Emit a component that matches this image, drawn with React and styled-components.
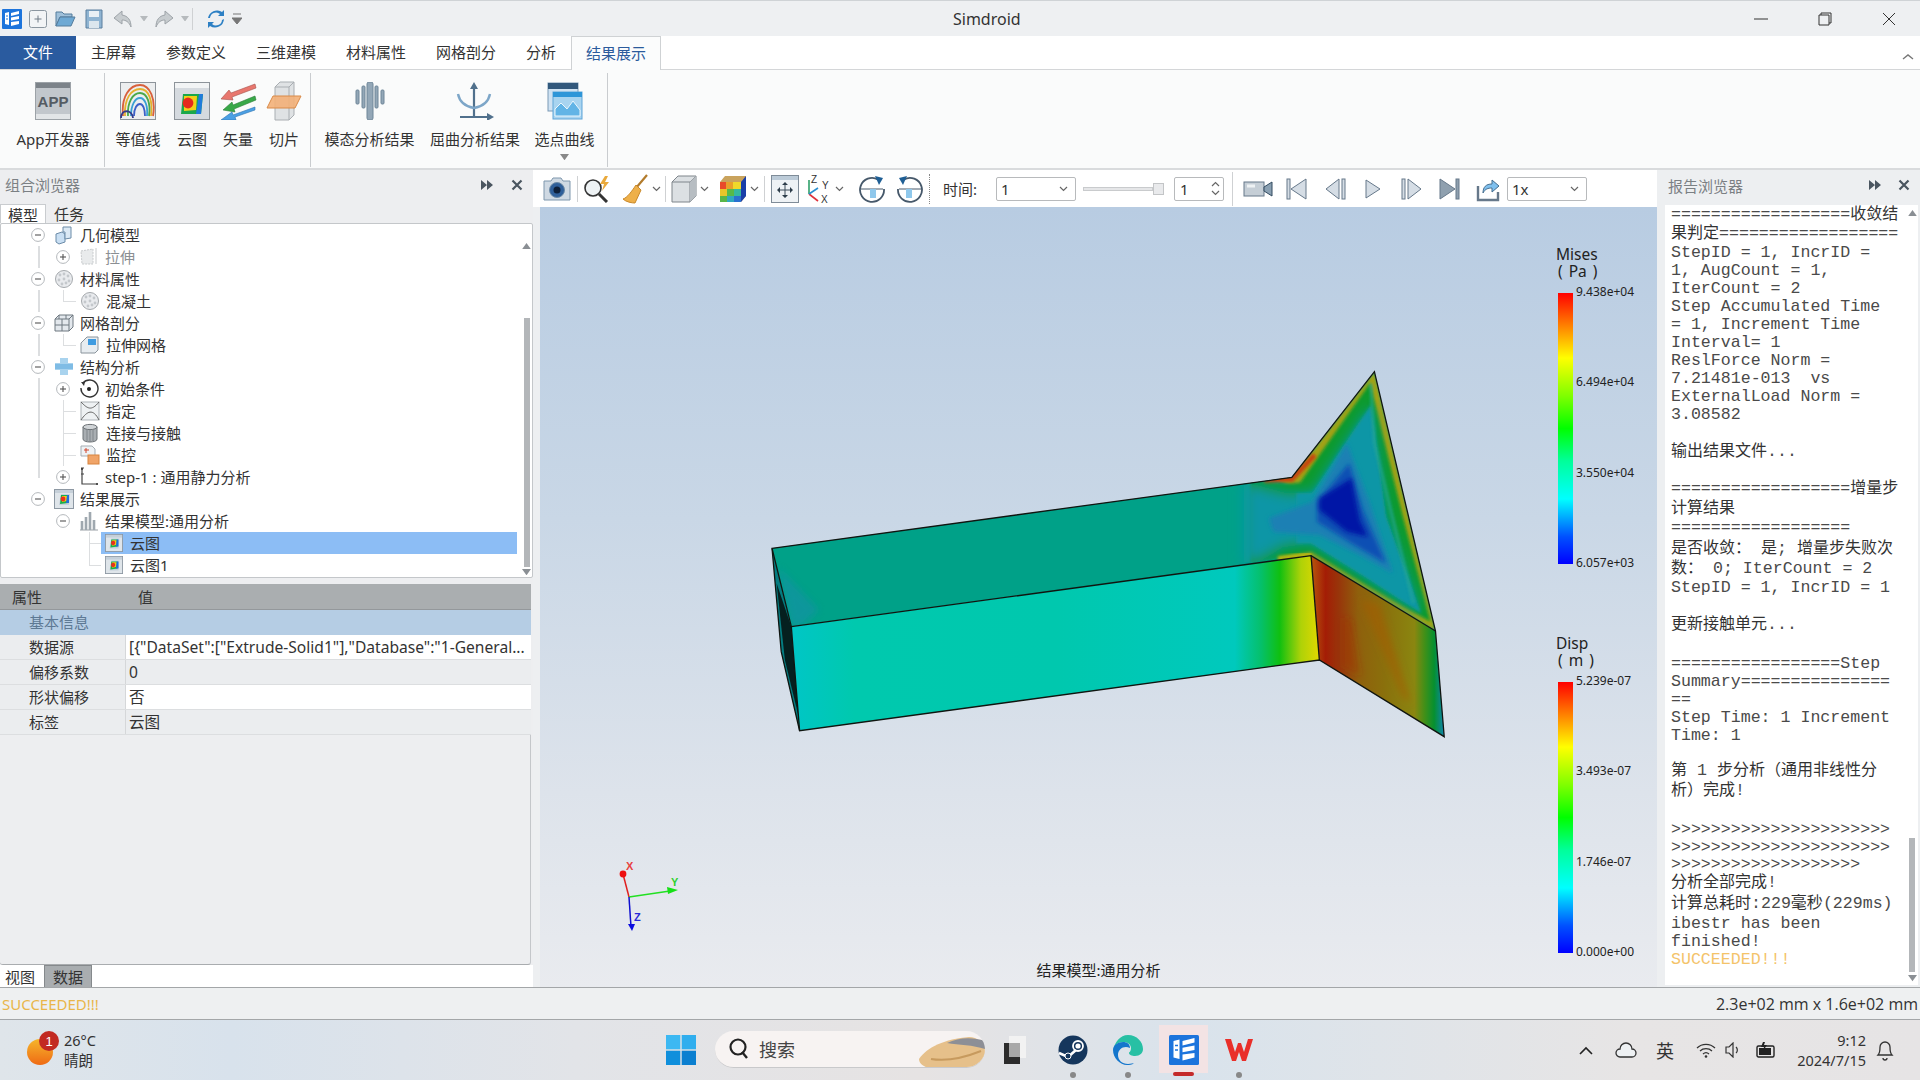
import React from "react";
import styled, { createGlobalStyle } from "styled-components";

const UI = `"Noto Sans","Noto Sans CJK SC",sans-serif`;
const Global = createGlobalStyle`
  html,body{margin:0;padding:0;background:#edeff1;overflow:hidden;}
  *{box-sizing:border-box;}
  body{font-family:${UI};color:#333;}
`;

const Page = styled.div`width:1920px;height:1080px;display:flex;flex-direction:column;overflow:hidden;background:#edeff1;`;

/* title bar */
const TitleBar = styled.div`height:36px;display:flex;align-items:center;background:#eef0f2;border-top:1px solid #cfd3d6;`;
const Quick = styled.div`width:953px;display:flex;align-items:center;padding-left:2px;`;
const QSlot = styled.div`width:${p => p.$w}px;margin-left:${p => p.$ml || 0}px;display:flex;justify-content:center;align-items:center;`;
const AppTitle = styled.div`width:67px;font-size:16px;line-height:20px;color:#333;white-space:nowrap;`;
const WinCtl = styled.div`flex:1;display:flex;justify-content:flex-end;padding-right:19px;gap:39px;`;
const WinBtn = styled.div`width:25px;display:flex;justify-content:center;`;

/* tabs */
const TabBar = styled.div`height:34px;display:flex;background:#fff;border-bottom:1px solid #d4d6d8;position:relative;`;
const FileTab = styled.div`width:76px;background:#2a5b9f;color:#fff;font-size:15px;line-height:33px;text-align:center;`;
const Tab = styled.div`padding:0 15px;font-size:15px;line-height:33px;color:${p => p.$on ? "#2b5b9c" : "#333"};
  ${p => p.$on ? "height:34px;background:#fbfcfc;border:1px solid #cfd2d4;border-bottom:none;margin-left:0;padding:0 14px;" : ""}`;
const Collapse = styled.div`margin-left:auto;padding:8px 6px 0 0;`;

/* ribbon */
const Ribbon = styled.div`height:100px;display:flex;background:#fafbfb;border-bottom:2px solid #d9dbdd;padding-top:3px;`;
const RCol = styled.div`width:${p => p.$w}px;margin-left:${p => p.$ml || 0}px;margin-right:${p => p.$mr || 0}px;display:flex;flex-direction:column;align-items:center;`;
const RIcon = styled.div`height:38px;margin-top:9px;display:flex;align-items:center;justify-content:center;`;
const RLabel = styled.div`margin-top:9px;font-size:15px;line-height:20px;color:#333;white-space:nowrap;`;
const RMore = styled.div`margin-top:5px;line-height:0;`;
const RSep = styled.div`width:1px;height:94px;background:#c9cccf;`;

/* main */
const Main = styled.div`height:817px;display:flex;`;
const Left = styled.div`width:533px;display:flex;flex-direction:column;background:#edeef0;`;
const DockHead = styled.div`height:34px;display:flex;align-items:center;padding:0 10px 5px 5px;gap:17px;font-size:15px;color:#7b8084;`;
const DockTitle = styled.div`flex:1;`;
const SubTabs = styled.div`height:19px;display:flex;font-size:15px;line-height:20px;`;
const SubTab = styled.div`white-space:nowrap;${p => p.$on ? "padding:0 7px;background:#fff;border:1px solid #c9cccf;border-bottom:none;width:46px;" : "padding:0 8px;"}`;
const TreeBox = styled.div`height:355px;display:flex;background:#fff;border:1px solid #c4c7ca;border-radius:2px;`;
const Rows = styled.div`flex:1;min-width:0;`;
const Row = styled.div`height:22px;display:flex;align-items:center;padding-left:${p => p.$pad}px;background:${p => p.$bg};`;
const Exp = styled.div`width:14px;height:14px;margin-right:${p => p.$mr}px;line-height:0;`;
const TreeIcon = styled.div`width:20px;height:20px;margin-right:6px;display:flex;align-items:center;justify-content:center;`;
const TreeLabel = styled.div`font-size:15px;line-height:22px;color:${p => p.$dim ? "#8b8f93" : "#333"};white-space:nowrap;`;
const Sel = styled.div`flex:1;height:22px;margin-right:4px;display:flex;align-items:center;padding-left:3px;background:${p => p.$on ? "#8cbdf5" : "transparent"};`;
const VScroll = styled.div`width:${p => p.$w}px;display:flex;flex-direction:column;align-items:center;flex:none;`;
const Thumb = styled.div`width:6px;background:#b3b6b9;height:${p => p.$h}px;`;
const Grow = styled.div`flex:1;`;
const Arrow = styled.div`height:${p => p.$h || 10}px;line-height:0;display:flex;align-items:center;`;

const Props = styled.div`margin-top:6px;width:531px;flex:1;display:flex;flex-direction:column;`;
const PHead = styled.div`height:26px;display:grid;grid-template-columns:126px 1fr;padding-left:12px;align-items:center;font-size:15px;background:#aaaeb0;border-bottom:1px solid #94989b;grid-auto-flow:column;`;
const PGroup = styled.div`height:25px;background:#b5cde4;color:#5d7994;font-size:15px;line-height:25px;padding-left:29px;`;
const PRow = styled.div`height:25px;display:grid;grid-template-columns:126px 1fr;background:${p => p.$alt ? "#ebedef" : "#fff"};border-bottom:1px solid #dcdee0;font-size:15px;line-height:24px;`;
const PKey = styled.div`padding-left:29px;border-right:1px solid #d5d7d9;background:#ebedef;`;
const PVal = styled.div`padding-left:3px;white-space:nowrap;overflow:hidden;font-size:15.6px;`;
const PFill = styled.div`flex:1;border-bottom:1px solid #a9acaf;border-right:1px solid #c4c7ca;border-radius:0 0 3px 3px;`;
const BottomTabs = styled.div`height:22px;display:flex;background:#fff;font-size:15px;line-height:24px;padding-left:5px;gap:9px;`;
const BTab = styled.div`${p => p.$on ? "padding:0 8px;background:#a9adb0;border:1px solid #85898c;border-bottom:none;line-height:22px;" : ""}`;

/* centre */
const Center = styled.div`width:1124px;display:flex;flex-direction:column;`;
const Toolbar = styled.div`height:37px;display:flex;align-items:center;background:#fff;padding-left:8px;`;
const TSlot = styled.div`width:${p => p.$w}px;margin-left:${p => p.$ml || 0}px;height:30px;flex:none;display:flex;align-items:center;justify-content:center;`;
const TSep = styled.div`width:1px;height:${p => p.$h || 26}px;background:#cfd1d3;margin:0 ${p => p.$m}px;flex:none;${p => p.$dots ? "background:none;border-left:1px dotted #888;" : ""}`;
const TimeLabel = styled.div`font-size:15px;margin:0 19px 0 10px;white-space:nowrap;line-height:20px;`;
const Combo = styled.div`width:${p => p.$w}px;height:24px;border:1px solid #b8babc;border-radius:2px;display:flex;align-items:center;justify-content:space-between;padding:0 6px 0 4px;font-size:15px;line-height:20px;background:#fff;flex:none;`;
const Slider = styled.div`width:81px;margin:0 10px 0 7px;display:flex;align-items:center;flex:none;`;
const SliderTrack = styled.div`flex:1;height:4px;background:#e5e6e8;border:1px solid #c9cbcd;`;
const SliderKnob = styled.div`width:11px;height:12px;background:#e9eaec;border:1px solid #c3c5c7;`;
const Spin = styled.div`width:50px;height:24px;border:1px solid #b8babc;border-radius:2px;display:flex;align-items:center;justify-content:space-between;padding:0 3px 0 5px;font-size:15px;line-height:20px;flex:none;`;
const SpinArrows = styled.div`display:flex;flex-direction:column;gap:3px;line-height:0;`;

const View = styled.div`flex:1;margin-left:7px;position:relative;background:linear-gradient(180deg,#b8cce2 0%,#c9d7e6 40%,#dde3eb 75%,#e9ebef 100%);overflow:hidden;`;
const Canvas = styled.svg`position:absolute;left:0;top:0;`;
const Legend = styled.div`position:absolute;left:1016px;top:${p => p.$top}px;`;
const LegTitle = styled.div`font-size:15.5px;line-height:17px;color:#222;padding-left:${p => p.$pad || 0}px;white-space:pre;word-spacing:2px;`;
const LegBody = styled.div`display:flex;margin-top:13px;margin-left:2px;height:271px;`;
const LegBar = styled.div`width:15px;background:linear-gradient(180deg,#ff0000 0%,#ff8000 12%,#ffff00 24%,#7fff00 38%,#00ff00 50%,#00ff9a 62%,#00ffff 76%,#0050ff 90%,#0000ff 100%);`;
const LegVals = styled.div`display:flex;flex-direction:column;justify-content:space-between;height:287px;margin:-9px 0 0 3px;font-size:12px;line-height:16px;color:#222;`;
const Caption = styled.div`position:absolute;left:0;right:0;bottom:7px;text-align:center;font-size:15px;line-height:20px;color:#222;`;

/* report */
const Right = styled.div`width:263px;display:flex;flex-direction:column;`;
const RHead = styled(DockHead)`padding:0 10px 5px 11px;height:35px;gap:16px;`;
const Report = styled.div`margin:0 2px 2px 8px;height:780px;background:#fff;display:flex;`;
const ReportText = styled.div`flex:1;padding-left:6px;font-family:"Liberation Mono",monospace;font-size:16.6px;color:#4a4a4a;overflow:hidden;`;
const Line = styled.div`height:${p => p.$h || 18}px;line-height:${p => p.$h || 18}px;white-space:pre;color:${p => p.$gold ? "#f4c36a" : "inherit"};${p => p.$cjk ? "transform:translateY(-2px);" : ""}`;
const Cjk = styled.span`font-family:"Noto Sans CJK SC",sans-serif;font-size:16px;color:#333;`;

/* status */
const Status = styled.div`height:33px;display:flex;justify-content:space-between;align-items:center;background:#eef0f1;border-top:1px solid #a3a6a8;border-bottom:1px solid #a3a6a8;padding:0 2px;font-size:15px;`;
const Gold = styled.div`color:#e9b64a;`;
const Dim = styled.div`font-size:16px;color:#333;font-family:"Open Sans",${UI};`;

/* taskbar */
const Taskbar = styled.div`height:60px;display:flex;background:linear-gradient(90deg,#dfe5ea 0%,#d8e2ec 12%,#e2e4e8 30%,#e6e3e3 48%,#d9e3ec 62%,#e7e5e5 85%,#e6e4e5 100%);`;
const Weather = styled.div`width:666px;display:flex;align-items:center;padding-left:26px;`;
const WeatherIcon = styled.div`width:38px;line-height:0;`;
const WeatherText = styled.div`font-size:14.5px;line-height:20px;color:#333;padding-top:0;`;
const WinLogo = styled.div`width:30px;display:flex;align-items:center;`;
const Search = styled.div`width:270px;height:37px;margin:11px 0 0 19px;border-radius:19px;background:#f7f3f2;border-bottom:1px solid #c9c9cb;display:flex;align-items:center;padding-left:14px;overflow:hidden;`;
const SearchText = styled.div`font-size:18px;margin-left:10px;color:#444;flex:1;`;
const TaskSlot = styled.div`width:${p => p.$w || 46}px;margin-left:${p => p.$ml || 0}px;height:60px;display:flex;flex-direction:column;align-items:center;padding-top:15px;flex:none;
  ${p => p.$active ? "background:linear-gradient(#f3e3e4,#f3e3e4) 0 5px/100% 48px no-repeat;" : ""}`;
const TaskIcon = styled.div`height:30px;display:flex;align-items:center;justify-content:center;`;
const Dot = styled.div`margin-top:7px;width:${p => p.$w || 6}px;height:${p => p.$w ? 4 : 6}px;border-radius:3px;background:${p => p.$c || "#888"};`;
const TrayItem = styled.div`width:${p => p.$w || 24}px;margin-left:${p => p.$ml || 0}px;height:60px;display:flex;align-items:center;justify-content:center;flex:none;font-size:18px;color:#333;padding-top:${p => p.$pt || 0}px;`;
const Clock = styled.div`width:80px;margin-left:9px;text-align:right;font-size:14.5px;line-height:20px;display:flex;flex-direction:column;justify-content:center;white-space:nowrap;color:#333;`;

/* icons */
const Chev = ({ c = "#666", w = 9 }) => <svg width={w} height="6" viewBox="0 0 9 6"><path d="M1 1l3.5 3.5L8 1" fill="none" stroke={c} strokeWidth="1.2" /></svg>;
const Tri = ({ d = "down", c = "#8a8f94", s = 9 }) => <svg width={s} height={s * .7} viewBox="0 0 10 7"><path d={d === "down" ? "M0 0h10L5 7z" : "M0 7h10L5 0z"} fill={c} /></svg>;
const SimLogo = ({ s = 20 }) => <svg width={s} height={s} viewBox="0 0 20 20"><rect width="20" height="20" rx="1" fill="#1c74dc" /><path d="M3 4l4-1v13l-4-1zM9 4l8-2v3l-8 2zM9 8.5l8-1.5v3l-8 1.5zM9 13l8-1v3l-8 2z" fill="#fff" /><path d="M4 7h2M4 10h2" stroke="#1c74dc" /></svg>;
const Heat = ({ s = 20, frame = "#8d98a3" }) => <svg width={s} height={s} viewBox="0 0 20 20"><rect x=".5" y=".5" width="19" height="19" fill="#dfe5ea" stroke={frame} /><rect x="1" y="1" width="18" height="3" fill="#c6d0d9" /><path d="M7 5h9l-1 11H5z" fill="#c4d0da" /><path d="M7 6h7v8l-8 1z" fill="#18b04a" /><path d="M8 7h5v5l-5 1z" fill="#f5c816" /><circle cx="9" cy="10" r="2.4" fill="#e8301c" /><path d="M13 6h2v8h-3z" fill="#1f6fd8" /></svg>;
const Exper = ({ open, mr }) => <Exp $mr={mr}><svg width="14" height="14" viewBox="0 0 14 14"><circle cx="7" cy="7" r="6.4" fill="#fff" stroke="#b4b8bc" /><path d="M4 7h6" stroke="#555" strokeWidth="1.1" />{!open && <path d="M7 4v6" stroke="#555" strokeWidth="1.1" />}</svg></Exp>;

const tIcons = {
  cubes: <svg width="20" height="20" viewBox="0 0 20 20"><path d="M2 9l6-2 3 2v8l-6 2-3-2z" fill="#c9dff3" stroke="#6b8ba8" /><path d="M9 2h8v11l-6 1V7H9z" fill="#dbe9f5" stroke="#6b8ba8" /></svg>,
  box: <svg width="20" height="20" viewBox="0 0 20 20"><path d="M2 4l12-2v15H3z" fill="#e9ebec" stroke="#c7cacc" strokeDasharray="2 1" /><path d="M17 1v16" stroke="#c7cacc" /></svg>,
  mat: <svg width="20" height="20" viewBox="0 0 20 20"><circle cx="10" cy="10" r="8.5" fill="#e9ebee" stroke="#a5a9ad" />{[[6, 6], [10, 5], [14, 7], [5, 11], [10, 10], [15, 12], [8, 15], [12, 14]].map(([x, y], i) => <circle key={i} cx={x} cy={y} r="1.4" fill="#c4c8cc" />)}</svg>,
  mesh: <svg width="20" height="20" viewBox="0 0 20 20"><path d="M1 6l4-4h14v12l-4 4H1z" fill="#e3e8ed" stroke="#6e7880" /><path d="M1 6h14v12M15 6l4-4M8 6v12M1 12h14M5 2v4M12 2v4" fill="none" stroke="#6e7880" /></svg>,
  meshb: <svg width="20" height="20" viewBox="0 0 20 20"><path d="M1 8l6-6h11v13l-3 3H1z" fill="#e7ecf0" stroke="#8a949c" /><rect x="8" y="4" width="8" height="6" fill="#3f9be0" /></svg>,
  struct: <svg width="20" height="20" viewBox="0 0 20 20"><path d="M6 1h8v5h5v7h-5v5H6v-5H1V6h5z" fill="#a9d3ee" /><rect x="1" y="7" width="18" height="5" fill="#7fbce5" /></svg>,
  init: <svg width="20" height="20" viewBox="0 0 20 20"><path d="M4 4a8.5 8.5 0 1 1-2 5" fill="none" stroke="#333" strokeWidth="1.4" /><circle cx="10" cy="10" r="2" fill="#222" /><path d="M2 3l4 0-1 4z" fill="#333" /></svg>,
  assign: <svg width="20" height="20" viewBox="0 0 20 20"><rect x="1" y="1" width="18" height="18" fill="#eef1f3" stroke="#aeb3b8" /><path d="M1 1c6 6 10 10 18 0M1 19c6-9 12-12 18 0" fill="none" stroke="#666" /></svg>,
  cyl: <svg width="20" height="20" viewBox="0 0 20 20"><path d="M3 4v12c0 4 14 4 14 0V4z" fill="#a9aeb2" stroke="#6d7276" /><ellipse cx="10" cy="4" rx="7" ry="2.6" fill="#cfd3d6" stroke="#6d7276" /><path d="M7 6v12M10 7v12M13 6v12" stroke="#80868b" /></svg>,
  mon: <svg width="20" height="20" viewBox="0 0 20 20"><path d="M1 1h11l3 3v7H1z" fill="#eef2f5" stroke="#a5adb4" /><path d="M4 5h5M6 3v5" stroke="#d0452c" /><rect x="8" y="10" width="11" height="9" fill="#f0a468" stroke="#d8843e" /></svg>,
  step: <svg width="20" height="20" viewBox="0 0 20 20"><path d="M3 1v16h16" fill="none" stroke="#444" strokeWidth="1.2" /><path d="M2 7h3M2 1h3" stroke="#444" /><circle cx="3" cy="2" r="1" fill="#333" /><circle cx="18" cy="17" r="1" fill="#333" /></svg>,
  bars: <svg width="20" height="20" viewBox="0 0 20 20"><path d="M1 19h18" stroke="#9aa0a5" /><path d="M3 10v9M7 6v13M11 1v18M15 9v10" stroke="#9fa8af" strokeWidth="2.6" /></svg>,
};

const treeData = [
  { l: 0, open: true, icon: "cubes", t: "几何模型", lines: [] },
  { l: 1, icon: "box", t: "拉伸", dim: true, lines: [[37, 0, 2, 22]] },
  { l: 0, open: true, icon: "mat", t: "材料属性", lines: [] },
  { l: 1, leaf: true, icon: "mat", t: "混凝土", lines: [[37, 0, 2, 22], [62, 0, 1, 11], [62, 11, 13, 1]] },
  { l: 0, open: true, icon: "mesh", t: "网格剖分", lines: [] },
  { l: 1, leaf: true, icon: "meshb", t: "拉伸网格", lines: [[37, 0, 2, 22], [62, 0, 1, 11], [62, 11, 13, 1]] },
  { l: 0, open: true, icon: "struct", t: "结构分析", lines: [] },
  { l: 1, icon: "init", t: "初始条件", lines: [[37, 0, 2, 22]] },
  { l: 1, leaf: true, icon: "assign", t: "指定", lines: [[37, 0, 2, 22], [62, 0, 1, 22], [62, 11, 13, 1]] },
  { l: 1, leaf: true, icon: "cyl", t: "连接与接触", lines: [[37, 0, 2, 22], [62, 0, 1, 22], [62, 11, 13, 1]] },
  { l: 1, leaf: true, icon: "mon", t: "监控", lines: [[37, 0, 2, 22], [62, 0, 1, 22], [62, 11, 13, 1]] },
  { l: 1, icon: "step", t: "step-1 : 通用静力分析", lines: [[37, 0, 2, 12]] },
  { l: 0, open: true, icon: "heat", t: "结果展示", lines: [] },
  { l: 1, open: true, icon: "bars", t: "结果模型:通用分析", lines: [] },
  { l: 2, icon: "heat", t: "云图", sel: true, lines: [[88, 0, 1, 22], [88, 11, 12, 1]] },
  { l: 2, icon: "heat", t: "云图1", lines: [[88, 0, 1, 11], [88, 11, 12, 1]] },
];
const lineBg = lines => lines.map(([x, y, w, h]) => `linear-gradient(#dcdee0,#dcdee0) ${x}px ${y}px/${w}px ${h}px no-repeat`).join(",") || "none";

const TreeRow = ({ d }) => {
  const icon = d.icon === "heat" ? <Heat s={d.l === 0 ? 20 : 18} /> : tIcons[d.icon];
  if (d.l === 2) return (
    <Row $pad={100} $bg={lineBg(d.lines)}>
      <Sel $on={d.sel}><TreeIcon>{icon}</TreeIcon><TreeLabel>{d.t}</TreeLabel></Sel>
    </Row>);
  const pad = d.l === 0 ? 30 : d.leaf ? 79 : 55;
  return (
    <Row $pad={pad} $bg={lineBg(d.lines)}>
      {!d.leaf && <Exper open={d.open} mr={9} />}
      <TreeIcon>{icon}</TreeIcon>
      <TreeLabel $dim={d.dim}>{d.t}</TreeLabel>
    </Row>);
};

const DockBtns = () => <>
  <svg width="14" height="12" viewBox="0 0 14 12"><path d="M1 1l6 5-6 5zM7 1l6 5-6 5z" fill="#4a5560" /></svg>
  <svg width="12" height="12" viewBox="0 0 12 12"><path d="M1.5 1.5l9 9M10.5 1.5l-9 9" stroke="#4a5560" strokeWidth="2.2" /></svg>
</>;

/* ribbon art */
const AppIcon = () => <svg width="36" height="38" viewBox="0 0 36 38"><rect x=".5" y=".5" width="35" height="37" fill="#c2c7cc" stroke="#9ca2a7" /><rect x="1" y="1" width="34" height="5" fill="#7c8389" /><rect x="1" y="32" width="34" height="5" fill="#e2e5e7" /><text x="18" y="25" textAnchor="middle" fontSize="15" fontWeight="700" fill="#555c63" fontFamily="Liberation Sans">APP</text></svg>;
const ContourIcon = () => <svg width="36" height="38" viewBox="0 0 36 38"><rect x=".5" y=".5" width="35" height="37" fill="#eceeef" stroke="#8d949a" /><g fill="none" strokeWidth="1.8"><path d="M3 34C1 14 10 3 20 3s16 14 13 31" stroke="#d8603c" /><path d="M5 34C4 17 11 7 20 7s13 12 11 27" stroke="#e5b12e" /><path d="M8 34C7 20 13 11 20 11s11 10 9 23" stroke="#49a84a" /><path d="M11 34c0-11 4-18 9-18s8 8 7 18" stroke="#39a0d4" /><path d="M14 34c0-8 3-12 6-12s5 5 5 12" stroke="#3b5fc8" /><path d="M1 36c0-9 11-9 12 0" stroke="#333a8a" /></g></svg>;
const CloudIcon = () => <svg width="36" height="38" viewBox="0 0 36 38"><rect x=".5" y=".5" width="35" height="37" fill="#d5dadf" stroke="#8d949a" /><rect x="1" y="1" width="34" height="5" fill="#f2f4f5" /><path d="M9 12h20l-2 20H7z" fill="#1ba84a" /><path d="M10 14h13l-1 14-12 1z" fill="#f3d018" /><circle cx="14" cy="21" r="5.4" fill="#e52a1c" /><path d="M25 12h4l-2 20h-5z" fill="#1f7bdc" /></svg>;
const VecIcon = () => <svg width="38" height="38" viewBox="0 0 38 38"><path d="M36 2L12 11l-2-3-8 9 12 1-1-3 24-9z" fill="#e8776e" stroke="#a5534c" strokeWidth=".6" /><path d="M36 14L14 23l-1-3-9 8 12 2-1-3 22-9z" fill="#38a848" stroke="#2c7c38" strokeWidth=".6" /><path d="M36 25L14 33l-1-3-11 8h15l-1-3 20-7z" fill="#4ba0e4" stroke="#2d73b2" strokeWidth=".6" /></svg>;
const SliceIcon = () => <svg width="36" height="40" viewBox="0 0 36 40"><path d="M9 6l5-5h14v33l-5 5H9z" fill="#dfe2e4" stroke="#a9aeb2" /><path d="M9 6h14v33M23 6l5-5" fill="none" stroke="#a9aeb2" /><path d="M7 15h28l-6 12H1z" fill="#f3b078" fillOpacity=".9" stroke="#d98a48" /></svg>;
const ModeIcon = () => <svg width="32" height="38" viewBox="0 0 32 38"><g fill="#93a7b7" stroke="#6f8698"><rect x="13" y="0" width="6" height="38" rx="2" /><rect x="8" y="4" width="3" height="22" rx="1" /><rect x="21" y="4" width="3" height="22" rx="1" /><rect x="2" y="8" width="3" height="14" rx="1" /><rect x="27" y="8" width="3" height="14" rx="1" /></g></svg>;
const BuckleIcon = () => <svg width="38" height="38" viewBox="0 0 38 38"><path d="M18 36V5M4 35h32" stroke="#50708c" strokeWidth="2.2" /><path d="M18 0l-4 7h8zM38 35l-7-4v8z" fill="#50708c" /><path d="M2 12c2 10 10 13 16 14 6-1 14-4 16-14" fill="none" stroke="#7da6c8" strokeWidth="2.4" /></svg>;
const CurveIcon = () => <svg width="36" height="38" viewBox="0 0 36 38"><rect x="1" y="1" width="30" height="28" fill="#cfe2f2" stroke="#7a9ab6" /><rect x="1" y="1" width="30" height="6" fill="#31587c" /><rect x="6" y="10" width="29" height="27" fill="#a8d4f0" stroke="#5fa5d8" /><rect x="6" y="10" width="29" height="5" fill="#2e96d8" /><path d="M8 34V27l6-6 6 6 6-8 7 9v6z" fill="#62b4e6" stroke="#eaf6fd" /></svg>;

/* toolbar art */
const Camera = () => <svg width="28" height="26" viewBox="0 0 28 26"><path d="M1 5h7l2-3h8l2 3h7v19H1z" fill="#cfd9e3" stroke="#7f97ad" /><circle cx="14" cy="14" r="7.5" fill="#2f5f9a" stroke="#6c8aa6" /><circle cx="14" cy="14" r="3.5" fill="#0d1f3a" /></svg>;
const MagBolt = () => <svg width="30" height="28" viewBox="0 0 30 28"><circle cx="10" cy="13" r="8" fill="#eef2f4" stroke="#333" strokeWidth="1.6" /><path d="M16 19l8 8" stroke="#333" strokeWidth="3" /><path d="M22 1l-5 8h4l-2 7 7-9h-4l3-6z" fill="#e9a93c" /></svg>;
const Broom = () => <svg width="26" height="30" viewBox="0 0 26 30"><path d="M25 1L14 14" stroke="#b27b2c" strokeWidth="2.2" /><path d="M14 11l5 5-6 13c-3 0-9-1-12-4 4-1 9-8 13-14z" fill="#eeb04a" stroke="#c9892a" /></svg>;
const BoxIc = () => <svg width="26" height="28" viewBox="0 0 26 28"><path d="M1 7l6-6h18v20l-6 6H1z" fill="#dce0e3" stroke="#7e858b" /><path d="M1 7h18v20M19 7l6-6" fill="none" stroke="#7e858b" /><path d="M19 7l6-6v20l-6 6z" fill="#b7bdc2" /></svg>;
const Cube3 = () => <svg width="28" height="28" viewBox="0 0 28 28"><path d="M1 7l5-6h21v20l-5 6H1z" fill="#c9a35d" /><rect x="1" y="7" width="6" height="7" fill="#e84a2a" /><rect x="7" y="7" width="7" height="7" fill="#e8a02a" /><rect x="14" y="7" width="8" height="7" fill="#efd92a" /><rect x="1" y="14" width="7" height="7" fill="#e8c52a" /><rect x="8" y="14" width="7" height="7" fill="#58b948" /><rect x="15" y="14" width="7" height="7" fill="#35b8a0" /><rect x="1" y="21" width="7" height="6" fill="#59b548" /><rect x="8" y="21" width="7" height="6" fill="#30a8c0" /><rect x="15" y="21" width="7" height="6" fill="#2a70d0" /><path d="M22 7l5-6v20l-5 6z" fill="#1a3fa8" /></svg>;
const FitIc = () => <svg width="28" height="28" viewBox="0 0 28 28"><rect x=".5" y=".5" width="27" height="27" fill="#eef2f5" stroke="#7f8c98" /><rect x="1" y="1" width="26" height="4" fill="#bccbd8" /><path d="M14 8v14M7 15h14" stroke="#3a4a58" /><path d="M14 7l-3 3h6zM14 23l-3-3h6zM6 15l3-3v6zM22 15l-3-3v6z" fill="#2d3d4a" /></svg>;
const Axes = () => <svg width="30" height="30" viewBox="0 0 30 30"><path d="M7 20V6" stroke="#2fa06a" strokeWidth="1.6" /><path d="M7 20l9 7" stroke="#e0323c" strokeWidth="1.6" /><path d="M7 20l9-6" stroke="#2a8fd0" strokeWidth="1.6" /><g fontFamily="Liberation Sans" fontSize="10" fill="#333"><text x="9" y="9">Z</text><text x="20" y="15">Y</text><text x="19" y="29">X</text></g></svg>;
const Rot = ({ flip }) => <svg width="28" height="28" viewBox="0 0 28 28" style={flip ? { transform: "scaleX(-1)" } : undefined}><path d="M20 4.5A12 12 0 1 0 26 14" fill="none" stroke="#46586a" strokeWidth="1.8" /><path d="M17 1l8 2-4 7z" fill="#1f5f95" /><path d="M3 14h22" stroke="#46586a" /><rect x="12" y="14" width="6" height="9" fill="#8fc8ec" /></svg>;
const pb = { fill: "#d5dde5", stroke: "#66788a" };
const Rec = () => <svg width="30" height="20" viewBox="0 0 30 20"><rect x="1" y="3" width="20" height="14" fill="#c5ced6" stroke="#66788a" /><path d="M4 7h8" stroke="#eef2f4" strokeWidth="3" /><path d="M21 8l8-5v14l-8-5z" fill="#8aa0b2" stroke="#324b60" /></svg>;
const First = () => <svg width="22" height="22" viewBox="0 0 22 22"><rect x="1" y="1" width="3" height="20" {...pb} /><path d="M20 1v20L5 11z" {...pb} /></svg>;
const Prev = () => <svg width="22" height="22" viewBox="0 0 22 22"><path d="M14 1v20L1 11z" {...pb} /><rect x="17" y="1" width="3" height="20" {...pb} /></svg>;
const Play = () => <svg width="18" height="22" viewBox="0 0 18 22"><path d="M2 2v18l14-9z" {...pb} /></svg>;
const Next = () => <svg width="22" height="22" viewBox="0 0 22 22"><rect x="2" y="1" width="3" height="20" {...pb} /><path d="M8 1v20l13-10z" {...pb} /></svg>;
const Last = () => <svg width="22" height="22" viewBox="0 0 22 22"><path d="M2 1v20l15-10z" fill="#8fa0af" stroke="#66788a" /><rect x="18" y="1" width="3" height="20" fill="#8fa0af" stroke="#66788a" /></svg>;
const Export = () => <svg width="26" height="26" viewBox="0 0 26 26"><path d="M3 10v14h20v-8" fill="none" stroke="#66788a" strokeWidth="2.4" /><path d="M8 17c0-6 3-9 9-9V4l7 6-7 6v-4c-4 0-7 1-9 5z" fill="#7fc0ee" stroke="#456d8e" /></svg>;

/* model */
const X = x => 750 + x / 2.178 - 540;
const Y = y => 350 + y / 3 - 207;
const p = (...a) => a.map(([x, y]) => `${X(x)},${Y(y)}`).join(" ");
const path = (...a) => "M" + a.map(([x, y]) => `${X(x)} ${Y(y)}`).join("L");
const A = [48, 595], B = [90, 830], C = [1180, 382], D = [1222, 617], E = [1360, 65], F = [1493, 843], G = [1512, 1160], H = [1240, 930], I = [108, 1142], L = [68, 905];

const Model = () => (
  <Canvas width="1117" height="780" viewBox="0 0 1117 780">
    <defs>
      <filter id="b1" x="-20%" y="-20%" width="140%" height="140%"><feGaussianBlur stdDeviation="1.4" /></filter>
      <filter id="b2" x="-20%" y="-20%" width="140%" height="140%"><feGaussianBlur stdDeviation="2.2" /></filter>
      <filter id="b4" x="-20%" y="-20%" width="140%" height="140%"><feGaussianBlur stdDeviation="3.5" /></filter>
      <filter id="b6" x="-30%" y="-30%" width="160%" height="160%"><feGaussianBlur stdDeviation="7" /></filter>
      <clipPath id="topClip"><polygon points={p(A, C, E, F, D, B)} /></clipPath>
      <clipPath id="sideClip"><polygon points={p(D, F, G, H)} /></clipPath>
      <linearGradient id="front" x1="0" x2="1" y1="0" y2="0">
        <stop offset="0" stopColor="#00c6c6" /><stop offset=".12" stopColor="#00c9ae" /><stop offset=".5" stopColor="#00c8ae" />
        <stop offset=".84" stopColor="#00c9bd" /><stop offset=".89" stopColor="#05c06a" /><stop offset=".925" stopColor="#10c010" />
        <stop offset=".965" stopColor="#aed208" /><stop offset="1" stopColor="#e2d800" />
      </linearGradient>
      <linearGradient id="side" gradientUnits="userSpaceOnUse" x1={X(1225)} x2={X(1510)} y1="0" y2="0">
        <stop offset="0" stopColor="#b5520c" /><stop offset=".1" stopColor="#a41d05" /><stop offset=".2" stopColor="#98350a" /><stop offset=".35" stopColor="#8f600c" />
        <stop offset=".55" stopColor="#8a700c" /><stop offset=".78" stopColor="#8a8610" /><stop offset=".86" stopColor="#3f9018" /><stop offset=".93" stopColor="#069030" /><stop offset="1" stopColor="#0e86a4" />
      </linearGradient>
    </defs>
    <polygon points={p(A, B, I, L)} fill="#047c80" />
    <polygon points={p([58, 700], B, [106, 1100], [76, 930])} fill="#05201f" />
    <polygon points={p(A, C, E, F, D, B)} fill="#00a188" />
    <g clipPath="url(#topClip)">
      <polygon points={p([60, 650], [150, 780], [110, 830], B)} fill="#1590a8" opacity=".6" filter="url(#b4)" />
      <polygon points={p([1130, 380], C, E, F, D, [1150, 650], [1150, 600], [1200, 420])} fill="#a2a212" filter="url(#b1)" />
      <polygon points={p([1090, 392], [1170, 402], [1198, 398], [1350, 100], [1422, 500], [1482, 815], [1350, 712], [1222, 605], [1140, 628], [1090, 640])} fill="#089a2a" filter="url(#b1)" />
      <polygon points={p([1075, 395], [1165, 428], [1225, 428], [1352, 165], [1385, 500], [1462, 790], [1350, 690], [1222, 580], [1160, 592], [1115, 630], [1075, 645])} fill="#0f96a6" filter="url(#b6)" />
      <polygon points={p([1190, 430], [1225, 428], [1352, 165], [1385, 500], [1462, 790], [1350, 690], [1222, 580], [1190, 580])} fill="#0f96a6" filter="url(#b1)" />
      <polygon points={p([1130, 505], [1225, 455], [1300, 280], [1350, 460], [1400, 670], [1335, 620], [1240, 555], [1140, 545])} fill="#1a80b4" filter="url(#b2)" />
      <polygon points={p([1235, 455], [1305, 340], [1335, 480], [1385, 640], [1310, 580], [1235, 515])} fill="#0e50b4" filter="url(#b2)" />
      <polygon points={p([1240, 445], [1310, 385], [1328, 510], [1345, 560], [1300, 545], [1240, 480])} fill="#0612a6" filter="url(#b2)" />
      <path d={path([1120, 390], [1180, 388], [1230, 315])} fill="none" stroke="#c8420e" strokeWidth="5" filter="url(#b1)" />
      <path d={path([1150, 625], [1222, 612])} fill="none" stroke="#c0b810" strokeWidth="4" filter="url(#b1)" />
      <path d={path([1352, 100], [1360, 280], [1445, 760])} fill="none" stroke="#27a898" strokeWidth="2.5" opacity=".8" filter="url(#b1)" />
    </g>
    <polygon points={p(B, D, H, I)} fill="url(#front)" />
    <polygon points={p(D, F, G, H)} fill="url(#side)" />
    <g clipPath="url(#sideClip)" filter="url(#b4)">
      <polygon points={p([1330, 750], [1370, 760], [1440, 1060], [1420, 1040])} fill="#a85a0c" opacity=".5" />
      <polygon points={p([1290, 800], [1310, 810], [1330, 980], [1290, 950])} fill="#a22808" opacity=".35" />
    </g>
    <g fill="none" stroke="#101510" strokeWidth="1.3">
      <polygon points={p(A, C, E, F, G, H, I, L)} />
      <polyline points={p(A, B, I)} />
      <polyline points={p(B, D, F)} />
      <polyline points={p(D, H)} />
    </g>
    <g transform="translate(-540 -207)">
      <path d="M629 897L623 874" stroke="#e02020" strokeWidth="1.5" /><circle cx="623" cy="874" r="3.4" fill="#ee1010" />
      <path d="M629 897L670 891" stroke="#22e022" strokeWidth="1.5" /><path d="M667 887l11 3-10 4z" fill="#16e016" />
      <path d="M629 897l2 30" stroke="#1010d0" strokeWidth="1.5" /><path d="M628 924h7l-3 7z" fill="#0c0ce0" />
      <g fontFamily="Liberation Sans" fontSize="11" fontWeight="700"><text x="626" y="870" fill="#e84040">X</text><text x="671" y="886" fill="#30d030">Y</text><text x="634" y="921" fill="#2a2ad8">Z</text></g>
    </g>
  </Canvas>
);

const report = [
  ["==================收敛结", 18], ["果判定==================", 21],
  ["StepID = 1, IncrID ="], ["1, AugCount = 1,"], ["IterCount = 2"], ["Step Accumulated Time"], ["= 1, Increment Time"], ["Interval= 1"], ["ReslForce Norm ="], ["7.21481e-013  vs"], ["ExternalLoad Norm ="], ["3.08582"], [" ", 17],
  ["输出结果文件...", 20], [" ", 17], ["==================增量步", 20], ["计算结果", 20], ["==================", 20], ["是否收敛： 是; 增量步失败次", 20], ["数： 0; IterCount = 2", 21], ["StepID = 1, IncrID = 1"], [" ", 17],
  ["更新接触单元...", 20], [" ", 21], ["=================Step"], ["Summary===============" ], ["=="], ["Step Time: 1 Increment"], ["Time: 1"], [" ", 15],
  ["第 1 步分析（通用非线性分", 20], ["析）完成!", 20], [" ", 21],
  [">>>>>>>>>>>>>>>>>>>>>>"], [">>>>>>>>>>>>>>>>>>>>>>"], [">>>>>>>>>>>>>>>>>>>", 15], ["分析全部完成!", 20], ["计算总耗时:229毫秒(229ms)", 23], ["ibestr has been"], ["finished!"], ["SUCCEEDED!!!", 18, true],
];
const cjkRe = /([\u4e00-\u9fff\uff00-\uffef]+)/;
const mixed = t => t.split(cjkRe).map((s, i) => i % 2 ? <Cjk key={i}>{s}</Cjk> : s);

const Copy = () => <svg width="24" height="30" viewBox="0 0 24 30"><rect x="6" y="1" width="17" height="22" fill="#f2f2f2" /><rect x="1" y="8" width="16" height="21" fill="#2c2c2c" /><rect x="6" y="8" width="11" height="14" fill="#a8a8a8" /></svg>;
const Steam = () => <svg width="30" height="30" viewBox="0 0 30 30"><circle cx="15" cy="15" r="14.5" fill="#15365c" /><circle cx="20" cy="11" r="5" fill="none" stroke="#fff" strokeWidth="1.8" /><circle cx="20" cy="11" r="2.6" fill="#fff" /><path d="M1 18l9 4 8-7" stroke="#fff" strokeWidth="2.6" fill="none" /><circle cx="10" cy="21" r="3" fill="#15365c" stroke="#fff" /></svg>;
const Edge = () => <svg width="32" height="32" viewBox="0 0 32 32"><path d="M16 1c9 0 15 7 15 14 0 4-3 7-8 7-3 0-6-1-6-3 0-1 2-1 2-5 0-4-4-6-8-6-5 0-9 3-10 8C3 8 8 1 16 1z" fill="#27c0a4" /><path d="M1 16c0-5 5-8 10-8 4 0 7 2 7 6-6-3-12 1-12 7 0 5 4 9 10 9 3 0 5-1 6-1-2 2-5 2-7 2C8 31 1 24 1 16z" fill="#1476cc" /></svg>;
const Wps = () => <svg width="30" height="26" viewBox="0 0 30 26"><path d="M1 2h6l4 13 3-9h3l3 9 4-13h5l-7 22h-4l-3-9-3 9H8z" fill="#e92f2a" /></svg>;

export default function App() {
  return (
    <Page>
      <Global />
      <TitleBar>
        <Quick>
          <QSlot $w={20}><SimLogo /></QSlot>
          <QSlot $w={18} $ml={7}><svg width="18" height="18" viewBox="0 0 18 18"><rect x=".5" y=".5" width="17" height="17" rx="2" fill="#f2f4f6" stroke="#8b96a0" /><path d="M5.5 9h7M9 5.5v7" stroke="#6e7a86" /></svg></QSlot>
          <QSlot $w={21} $ml={8}><svg width="21" height="17" viewBox="0 0 21 17"><path d="M1 2h6l2 2h8v3H5l-4 9z" fill="#9fc0da" stroke="#557c9c" /><path d="M5 7h15l-4 9H1z" fill="#6ea9d4" stroke="#557c9c" /></svg></QSlot>
          <QSlot $w={18} $ml={9}><svg width="18" height="20" viewBox="0 0 18 20"><path d="M1 1h16v18H1z" fill="#8fb4d2" stroke="#5a7f9e" /><rect x="4" y="2" width="10" height="6" fill="#e9f0f5" /><rect x="4" y="12" width="10" height="7" fill="#dbe6ee" /></svg></QSlot>
          <QSlot $w={20} $ml={10}><svg width="20" height="18" viewBox="0 0 20 18"><path d="M9 1L1 8l8 6v-4c4 0 7 2 9 7 0-7-3-11-9-12z" fill="#c7cccf" stroke="#9da3a8" /></svg></QSlot>
          <QSlot $w={8} $ml={7}><Tri c="#b6babd" s={8} /></QSlot>
          <QSlot $w={20} $ml={6}><svg width="20" height="18" viewBox="0 0 20 18"><path d="M11 1l8 7-8 6v-4c-4 0-7 2-9 7 0-7 3-11 9-12z" fill="#c7cccf" stroke="#9da3a8" /></svg></QSlot>
          <QSlot $w={8} $ml={7}><Tri c="#b6babd" s={8} /></QSlot>
          <TSep $m={3} $h={22} />
          <QSlot $w={18} $ml={11}><svg width="18" height="20" viewBox="0 0 18 20"><path d="M3 9a6 6 0 0 1 10-4l-2 2h6V1l-2 2A9 9 0 0 0 1 9zM15 11a6 6 0 0 1-10 4l2-2H1v6l2-2a9 9 0 0 0 14-7z" fill="#2d80c4" /></svg></QSlot>
          <QSlot $w={10} $ml={7}><svg width="10" height="11" viewBox="0 0 10 11"><path d="M1 1h8M0 5h10l-5 6z" stroke="#777" fill="#777" /></svg></QSlot>
        </Quick>
        <AppTitle>Simdroid</AppTitle>
        <WinCtl>
          <WinBtn><svg width="14" height="14" viewBox="0 0 14 14"><path d="M0 7h14" stroke="#333" /></svg></WinBtn>
          <WinBtn><svg width="14" height="14" viewBox="0 0 14 14"><path d="M3 3V1h10v10h-2M1 3h10v10H1z" fill="none" stroke="#333" /></svg></WinBtn>
          <WinBtn><svg width="14" height="14" viewBox="0 0 14 14"><path d="M1 1l12 12M13 1L1 13" stroke="#333" /></svg></WinBtn>
        </WinCtl>
      </TitleBar>

      <TabBar>
        <FileTab>文件</FileTab>
        {["主屏幕", "参数定义", "三维建模", "材料属性", "网格剖分", "分析"].map(t => <Tab key={t}>{t}</Tab>)}
        <Tab $on>结果展示</Tab>
        <Collapse><svg width="12" height="8" viewBox="0 0 12 8"><path d="M1 6l5-4 5 4" fill="none" stroke="#777" strokeWidth="1.4" /></svg></Collapse>
      </TabBar>

      <Ribbon>
        <RCol $w={102} $ml={2}><RIcon><AppIcon /></RIcon><RLabel>App开发器</RLabel></RCol>
        <RSep />
        <RCol $w={66}><RIcon><ContourIcon /></RIcon><RLabel>等值线</RLabel></RCol>
        <RCol $w={42}><RIcon><CloudIcon /></RIcon><RLabel>云图</RLabel></RCol>
        <RCol $w={50}><RIcon><VecIcon /></RIcon><RLabel>矢量</RLabel></RCol>
        <RCol $w={42} $mr={5}><RIcon><SliceIcon /></RIcon><RLabel>切片</RLabel></RCol>
        <RSep />
        <RCol $w={117}><RIcon><ModeIcon /></RIcon><RLabel>模态分析结果</RLabel></RCol>
        <RCol $w={94}><RIcon><BuckleIcon /></RIcon><RLabel>屈曲分析结果</RLabel></RCol>
        <RCol $w={85}><RIcon><CurveIcon /></RIcon><RLabel>选点曲线</RLabel><RMore><Tri c="#888" /></RMore></RCol>
        <RSep />
      </Ribbon>

      <Main>
        <Left>
          <DockHead><DockTitle>组合浏览器</DockTitle><DockBtns /></DockHead>
          <SubTabs><SubTab $on>模型</SubTab><SubTab>任务</SubTab></SubTabs>
          <TreeBox>
            <Rows>{treeData.map((d, i) => <TreeRow key={i} d={d} />)}</Rows>
            <VScroll $w={11}>
              <Arrow $h={44}><Tri d="up" /></Arrow>
              <Grow />
              <Thumb $h={249} />
              <Arrow $h={10}><Tri /></Arrow>
            </VScroll>
          </TreeBox>
          <Props>
            <PHead><div>属性</div><div>值</div></PHead>
            <PGroup>基本信息</PGroup>
            <PRow><PKey>数据源</PKey><PVal>{`[{"DataSet":["Extrude-Solid1"],"Database":"1-General...`}</PVal></PRow>
            <PRow $alt><PKey>偏移系数</PKey><PVal>0</PVal></PRow>
            <PRow><PKey>形状偏移</PKey><PVal>否</PVal></PRow>
            <PRow $alt><PKey>标签</PKey><PVal>云图</PVal></PRow>
            <PFill />
          </Props>
          <BottomTabs><div>视图</div><BTab $on>数据</BTab></BottomTabs>
        </Left>

        <Center>
          <Toolbar>
            <TSlot $w={32}><Camera /></TSlot><TSep $m={4} />
            <TSlot $w={31}><MagBolt /></TSlot>
            <TSlot $w={32} $ml={6}><Broom /></TSlot>
            <TSlot $w={10}><Chev /></TSlot><TSep $m={4} />
            <TSlot $w={26} $ml={1}><BoxIc /></TSlot>
            <TSlot $w={14}><Chev /></TSlot>
            <TSlot $w={28} $ml={8}><Cube3 /></TSlot>
            <TSlot $w={14}><Chev /></TSlot><TSep $m={3} />
            <TSlot $w={32} $ml={1}><FitIc /></TSlot>
            <TSlot $w={32}><Axes /></TSlot>
            <TSlot $w={12}><Chev /></TSlot>
            <TSlot $w={32} $ml={11}><Rot /></TSlot>
            <TSlot $w={32} $ml={6}><Rot flip /></TSlot>
            <TSep $m={3} $dots $h={30} />
            <TimeLabel>时间:</TimeLabel>
            <Combo $w={80}>1<Chev w={11} /></Combo>
            <Slider><SliderTrack /><SliderKnob /></Slider>
            <Spin>1<SpinArrows><svg width="9" height="6" viewBox="0 0 9 6"><path d="M1 5l3.5-3.5L8 5" fill="none" stroke="#666" strokeWidth="1.2" /></svg><Chev w={9} /></SpinArrows></Spin>
            <TSep $m={8} $h={34} />
            <TSlot $w={34}><Rec /></TSlot>
            <TSlot $w={30} $ml={7}><First /></TSlot>
            <TSlot $w={30} $ml={9}><Prev /></TSlot>
            <TSlot $w={30} $ml={7}><Play /></TSlot>
            <TSlot $w={30} $ml={8}><Next /></TSlot>
            <TSlot $w={30} $ml={8}><Last /></TSlot>
            <TSlot $w={30} $ml={9}><Export /></TSlot>
            <TSlot $w={2} $ml={2} />
            <Combo $w={80}>1x<Chev w={11} /></Combo>
          </Toolbar>
          <View>
            <Model />
            <Legend $top={39}>
              <LegTitle>Mises</LegTitle><LegTitle $pad={2}>{"( Pa )"}</LegTitle>
              <LegBody><LegBar /><LegVals><div>9.438e+04</div><div>6.494e+04</div><div>3.550e+04</div><div>6.057e+03</div></LegVals></LegBody>
            </Legend>
            <Legend $top={428}>
              <LegTitle>Disp</LegTitle><LegTitle $pad={2}>{"( m )"}</LegTitle>
              <LegBody><LegBar /><LegVals><div>5.239e-07</div><div>3.493e-07</div><div>1.746e-07</div><div>0.000e+00</div></LegVals></LegBody>
            </Legend>
            <Caption>结果模型:通用分析</Caption>
          </View>
        </Center>

        <Right>
          <RHead><DockTitle>报告浏览器</DockTitle><DockBtns /></RHead>
          <Report>
            <ReportText>{report.map(([t, h, g], i) => <Line key={i} $h={h} $gold={g} $cjk={cjkRe.test(t)}>{mixed(t)}</Line>)}</ReportText>
            <VScroll $w={12}>
              <Arrow $h={16}><Tri d="up" /></Arrow>
              <Grow />
              <Thumb $h={134} />
              <Arrow $h={13}><Tri /></Arrow>
            </VScroll>
          </Report>
        </Right>
      </Main>

      <Status><Gold>SUCCEEDED!!!</Gold><Dim>2.3e+02 mm x 1.6e+02 mm</Dim></Status>

      <Taskbar>
        <Weather>
          <WeatherIcon><svg width="38" height="40" viewBox="0 0 38 40"><defs><linearGradient id="sun" x1="0" x2="0" y1="0" y2="1"><stop offset="0" stopColor="#f5b62c" /><stop offset="1" stopColor="#ef6a14" /></linearGradient></defs><circle cx="14" cy="22" r="13" fill="url(#sun)" /><circle cx="23" cy="11" r="10" fill="#c22a22" /><text x="23" y="16" textAnchor="middle" fontSize="13" fill="#fff" fontFamily="Liberation Sans">1</text></svg></WeatherIcon>
          <WeatherText>26°C<br />晴朗</WeatherText>
        </Weather>
        <WinLogo><svg width="30" height="30" viewBox="0 0 30 30"><rect width="14.3" height="14.3" fill="#3cb8f2" /><rect x="15.7" width="14.3" height="14.3" fill="#30aeee" /><rect y="15.7" width="14.3" height="14.3" fill="#0f8fdc" /><rect x="15.7" y="15.7" width="14.3" height="14.3" fill="#0b7fd0" /></svg></WinLogo>
        <Search>
          <svg width="20" height="22" viewBox="0 0 20 22"><circle cx="9" cy="9" r="7.5" fill="none" stroke="#222" strokeWidth="2.2" /><path d="M13 14l5 6" stroke="#222" strokeWidth="2.4" /></svg>
          <SearchText>搜索</SearchText>
          <svg width="68" height="37" viewBox="0 0 68 37"><path d="M2 28C10 16 28 8 52 6c8 0 16 6 16 14v17H14C8 37 2 33 2 28z" fill="#e6c08a" /><path d="M30 12c12-6 26-6 38-2v8c-12-4-26-4-38-6z" fill="#8d8f96" /><path d="M14 28c12 2 30 0 50-8" fill="none" stroke="#c79a5e" strokeWidth="2" /></svg>
        </Search>
        <TaskSlot $ml={7}><TaskIcon><Copy /></TaskIcon></TaskSlot>
        <TaskSlot $ml={12}><TaskIcon><Steam /></TaskIcon><Dot /></TaskSlot>
        <TaskSlot $ml={9}><TaskIcon><Edge /></TaskIcon><Dot /></TaskSlot>
        <TaskSlot $ml={8} $w={49} $active><TaskIcon><SimLogo s={30} /></TaskIcon><Dot $w={21} $c="#c42a2a" /></TaskSlot>
        <TaskSlot $ml={8}><TaskIcon><Wps /></TaskIcon><Dot /></TaskSlot>
        <TrayItem $ml={312}><svg width="14" height="9" viewBox="0 0 14 9"><path d="M1 8l6-6 6 6" fill="none" stroke="#222" strokeWidth="1.6" /></svg></TrayItem>
        <TrayItem $ml={16}><svg width="22" height="18" viewBox="0 0 22 18"><path d="M5 16a4 4 0 0 1 0-8 6 6 0 0 1 12 0 4 4 0 0 1 0 8z" fill="#eef1f3" stroke="#333" strokeWidth="1.3" /></svg></TrayItem>
        <TrayItem $ml={15}>英</TrayItem>
        <TrayItem $ml={17}><svg width="20" height="16" viewBox="0 0 20 16"><path d="M1 6a13 13 0 0 1 18 0M4 9a9 9 0 0 1 12 0M7 12a4.5 4.5 0 0 1 6 0" fill="none" stroke="#333" strokeWidth="1.3" /><circle cx="10" cy="14.5" r="1.3" fill="#333" /></svg></TrayItem>
        <TrayItem $ml={4} $w={22}><svg width="16" height="16" viewBox="0 0 16 16"><path d="M1 5h3l4-4v14l-4-4H1z" fill="none" stroke="#333" strokeWidth="1.2" /><path d="M11 5a4 4 0 0 1 0 6" fill="none" stroke="#333" strokeWidth="1.2" /></svg></TrayItem>
        <TrayItem $ml={11} $w={22}><svg width="20" height="18" viewBox="0 0 20 18"><rect x="1" y="5" width="17" height="11" rx="1.5" fill="none" stroke="#222" strokeWidth="1.4" /><rect x="3" y="7" width="12" height="7" fill="#222" /><path d="M7 1l-2 5h3l-1 4 4-6H8l1-3z" fill="#222" /></svg></TrayItem>
        <Clock><div>9:12</div><div>2024/7/15</div></Clock>
        <TrayItem $ml={8} $w={22}><svg width="18" height="22" viewBox="0 0 18 22"><path d="M2 16c2-2 2-4 2-8a5 5 0 0 1 10 0c0 4 0 6 2 8z" fill="none" stroke="#333" strokeWidth="1.3" /><path d="M7 19a2 2 0 0 0 4 0" fill="none" stroke="#333" strokeWidth="1.3" /></svg></TrayItem>
      </Taskbar>
    </Page>
  );
}
